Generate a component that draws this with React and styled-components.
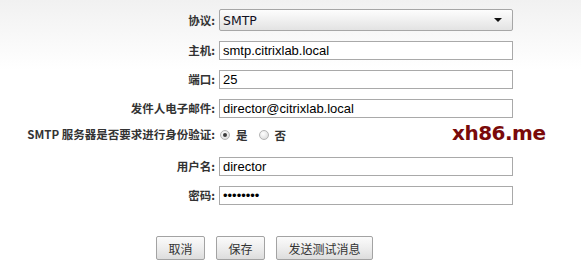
import React, { useState } from 'react';
import styled, { createGlobalStyle } from 'styled-components';

const GlobalStyle = createGlobalStyle`
  html, body {
    margin: 0;
    padding: 0;
  }
  body {
    width: 581px;
    height: 278px;
    overflow: hidden;
    background: linear-gradient(to bottom, #f1f1f1 0px, #ffffff 70px, #ffffff 100%);
    font-family: "Liberation Sans", "Noto Sans CJK SC", sans-serif;
  }
`

const Page = styled.div`
    position: relative;
    width: 581px;
    height: 278px;
    padding-top: 9px;
    box-sizing: border-box;
`

// 表单网格
const FormGrid = styled.div`
    display: grid;
    grid-template-columns: 215px 294px;
    column-gap: 4px;
    row-gap: 10px;
    align-items: center;
`

const Label = styled.label`
    text-align: right;
    font-family: "Noto Sans CJK SC", sans-serif;
    font-weight: bold;
    font-size: 11.5px;
    color: #333333;
    white-space: nowrap;
    line-height: ${props => props.raised ? '13px' : '19px'};
    padding-bottom: ${props => props.raised ? '6px' : '0'};
`

const TextInput = styled.input`
    box-sizing: border-box;
    width: 100%;
    height: 19px;
    margin: 0;
    padding: 0 3px;
    border: 1px solid #a9a9a9;
    background: #ffffff;
    font-family: "Liberation Sans", sans-serif;
    font-size: 13px;
    color: #000000;
    outline: none;
`

const SelectBox = styled.div`
    box-sizing: border-box;
    height: 22px;
    display: flex;
    align-items: center;
    justify-content: space-between;
    padding: 0 10px 0 3px;
    border: 1px solid #a6a6a6;
    border-radius: 2px;
    background: linear-gradient(to bottom, #fdfdfd 0%, #f0f0f0 50%, #e3e3e3 100%);
    font-family: "DejaVu Sans", sans-serif;
    font-size: 12.5px;
    color: #111122;
`

const Arrow = styled.span`
    width: 0;
    height: 0;
    border-left: 4px solid transparent;
    border-right: 4px solid transparent;
    border-top: 4px solid #111111;
`

const RadioGroup = styled.div`
    display: flex;
    align-items: center;
    height: 13px;
    padding-bottom: 6px;
    font-family: "Noto Sans CJK SC", sans-serif;
    font-weight: bold;
    font-size: 11.5px;
    color: #333333;
`

const RadioOption = styled.label`
    display: flex;
    align-items: center;
    margin-right: 10px;
    cursor: pointer;
`

const Radio = styled.span`
    box-sizing: border-box;
    width: 10px;
    height: 10px;
    border-radius: 50%;
    border: 1px solid #b4b4b4;
    background: radial-gradient(circle at 40% 35%, #ffffff 0%, #e6e6e6 60%, #d2d2d2 100%);
    margin: 0 6px 0 1px;
    display: flex;
    align-items: center;
    justify-content: center;
    &::after {
        content: '';
        width: 4px;
        height: 4px;
        border-radius: 50%;
        background: ${props => props.checked ? '#3c3c3c' : 'transparent'};
    }
`

const ButtonRow = styled.div`
    display: flex;
    gap: 11px;
    padding-left: 156px;
    margin-top: 31px;
`

const Button = styled.button`
    box-sizing: border-box;
    height: 24px;
    min-width: ${props => props.wide ? '97px' : '49px'};
    padding: 0 10px;
    border: 1px solid #a3a3a3;
    border-radius: 2px;
    background: linear-gradient(to bottom, #fbfbfb 0%, #ececec 55%, #dddddd 100%);
    font-family: "Noto Sans CJK SC", sans-serif;
    font-size: 12px;
    color: #333333;
    cursor: pointer;
`

// 水印
const Watermark = styled.div`
    position: absolute;
    left: 452px;
    top: 121px;
    font-family: "DejaVu Sans", sans-serif;
    font-weight: bold;
    font-size: 20px;
    letter-spacing: -0.5px;
    color: #7a0a0a;
`

const App = () => {
    const [auth, setAuth] = useState(true);

    return (
        <>
            <GlobalStyle />
            <Page>
                <FormGrid>
                    <Label>协议:</Label>
                    <SelectBox>
                        <span>SMTP</span>
                        <Arrow />
                    </SelectBox>

                    <Label>主机:</Label>
                    <TextInput defaultValue="smtp.citrixlab.local" />

                    <Label>端口:</Label>
                    <TextInput defaultValue="25" />

                    <Label>发件人电子邮件:</Label>
                    <TextInput defaultValue="director@citrixlab.local" />

                    <Label raised>SMTP 服务器是否要求进行身份验证:</Label>
                    <RadioGroup>
                        <RadioOption onClick={() => setAuth(true)}>
                            <Radio checked={auth} />是
                        </RadioOption>
                        <RadioOption onClick={() => setAuth(false)}>
                            <Radio checked={!auth} />否
                        </RadioOption>
                    </RadioGroup>

                    <Label>用户名:</Label>
                    <TextInput defaultValue="director" />

                    <Label>密码:</Label>
                    <TextInput type="password" defaultValue="director" />
                </FormGrid>
                <ButtonRow>
                    <Button>取消</Button>
                    <Button>保存</Button>
                    <Button wide>发送测试消息</Button>
                </ButtonRow>
                <Watermark>xh86.me</Watermark>
            </Page>
        </>
    );
};

export default App;
